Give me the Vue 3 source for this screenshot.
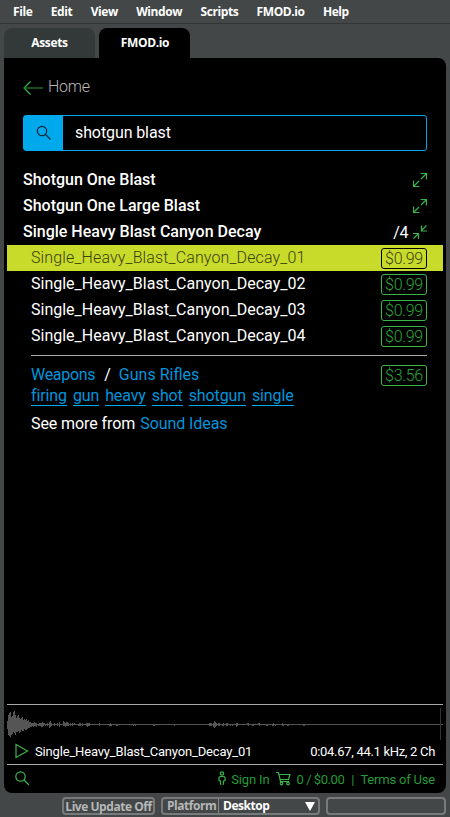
<script setup>
const menus = ['File', 'Edit', 'View', 'Window', 'Scripts', 'FMOD.io', 'Help']
const titles = [
  { name: 'Shotgun One Blast', open: false },
  { name: 'Shotgun One Large Blast', open: false },
  { name: 'Single Heavy Blast Canyon Decay', open: true },
]
const sounds = ['01', '02', '03', '04'].map((n, i) => ({
  name: 'Single_Heavy_Blast_Canyon_Decay_' + n,
  selected: i === 0,
}))
const tags = ['firing', 'gun', 'heavy', 'shot', 'shotgun', 'single']

// Peak heights above and below the centre line, one pair per pixel column
const attack = [
  [3, 4], [9, 10], [11, 11], [12, 12], [7, 10], [8, 9], [12, 7], [13, 8], [9, 10], [6, 7],
  [8, 7], [9, 6], [6, 8], [5, 7], [6, 5], [7, 6], [4, 6], [5, 4], [4, 5], [5, 5],
  [3, 4], [4, 3], [2, 3], [2, 2], [1, 2], [1, 1], [1, 2], [2, 1], [1, 1], [1, 2],
]
const bumps = {
  31: [0, 1], 32: [1, 1], 33: [1, 1], 34: [1, 2], 35: [2, 2], 36: [1, 1], 37: [1, 0], 38: [0, 1], 40: [1, 1],
  42: [2, 3], 43: [3, 2], 44: [1, 1], 47: [1, 1], 50: [1, 1], 52: [2, 2], 56: [3, 1], 57: [2, 1], 58: [1, 2],
  59: [2, 1], 60: [2, 1], 61: [1, 1], 63: [1, 1], 65: [1, 1], 67: [1, 0], 71: [0, 1], 72: [1, 1], 73: [1, 1],
  75: [1, 1], 79: [1, 1], 80: [1, 2], 81: [1, 1], 82: [1, 1], 92: [1, 1], 102: [0, 1], 103: [1, 1], 104: [0, 1],
  109: [0, 1], 110: [0, 1], 126: [0, 1], 128: [0, 1], 146: [0, 1], 147: [0, 1], 167: [0, 1],
  202: [1, 1], 203: [1, 1], 204: [1, 1], 206: [1, 2], 207: [3, 3], 208: [2, 2], 209: [1, 1], 211: [1, 1],
  212: [1, 1], 215: [0, 1], 216: [1, 1], 219: [1, 1], 220: [1, 1], 223: [0, 1], 225: [0, 1], 229: [1, 2],
  230: [1, 1], 240: [1, 0], 241: [1, 1], 245: [0, 1], 246: [0, 1], 251: [1, 0], 252: [1, 1], 259: [0, 1],
  260: [0, 1], 265: [0, 1], 266: [1, 1], 268: [0, 1], 275: [1, 1], 276: [0, 1], 280: [0, 1], 281: [0, 1], 296: [0, 1], 297: [0, 1],
}
const bars = attack.map((p, i) => [i, p]).concat(Object.entries(bumps).map(([x, p]) => [Number(x), p]))
const wave = bars.map(([x, [up, down]]) => `M${x} ${19 - up}h1v${up + down + 1}h-1z`).join('')
</script>

<template>
  <div class="app">
    <nav class="menu"><span v-for="m in menus" :key="m">{{ m }}</span></nav>
    <div class="tabs">
      <div class="tab">Assets</div>
      <div class="tab active">FMOD.io</div>
    </div>

    <main class="panel">
      <div class="home">
        <svg width="20" height="16" viewBox="0 0 20 16"><path d="M7.500 1.500 1 8l6.500 6.500" /><path class="shaft" d="M1 8h19" /></svg>
        <span>Home</span>
      </div>
      <div class="search">
        <div class="lens">
          <svg width="16" height="16" viewBox="0 0 16 16"><circle cx="6" cy="6" r="4.700" /><path d="m9.500 9.500 5 5" /></svg>
        </div>
        <span class="query">shotgun blast</span>
      </div>

      <div v-for="t in titles" :key="t.name" class="title">
        <span class="name">{{ t.name }}</span>
        <span v-if="t.open" class="count">/4</span>
        <svg width="14" height="14" viewBox="0 0 14 14">
          <path v-if="t.open" d="M13.500.5 8.500 5.500M8.500 0.500v5.500H14M.5 13.500l5-5M0 8.500h5.500V14" />
          <path v-else d="M8 6l5.500-5.500M7.500 .5h6V6.500M6 8l-5.500 5.500M.5 7.500v6H6.500" />
        </svg>
      </div>

      <div v-for="s in sounds" :key="s.name" class="sound" :class="{ selected: s.selected }">
        <span class="name">{{ s.name }}</span>
        <span class="price">$0.99</span>
      </div>

      <section class="details">
        <div class="category">
          <a class="c1">Weapons</a><span class="slash">/</span><a class="c2">Guns Rifles</a>
          <span class="price">$3.56</span>
        </div>
        <div class="tags"><a v-for="t in tags" :key="t">{{ t }}</a></div>
        <div class="more"><span>See more from</span><a>Sound Ideas</a></div>
      </section>

      <section class="player">
        <svg class="wave" width="436" height="38" viewBox="0 0 436 38">
          <path :d="wave" /><path d="M0 19h436v1H0z" /><path class="cursor" d="M433 3h1v32h-1z" />
        </svg>
        <div class="track">
          <svg width="14" height="16" viewBox="0 0 14 16"><path d="M1 1.500v13L12.500 8z" /></svg>
          <span class="file">Single_Heavy_Blast_Canyon_Decay_01</span>
          <span class="info">0:04.67, 44.1 kHz, 2 Ch</span>
        </div>
      </section>

      <footer class="account">
        <svg class="find" width="15" height="15" viewBox="0 0 15 15"><circle cx="5.500" cy="5.500" r="4.700" /><path d="m9 9 5 5" /></svg>
        <svg class="person" width="8" height="15" viewBox="0 0 8 15">
          <circle cx="4" cy="2.500" r="1.700" />
          <path d="M2.500 13.500V10L1 9.500V6.500q0-1 1.500-1h3q1.500 0 1.500 1v3L5.500 10v3.500M2.500 13.500h.8M5.500 13.500h-.8" />
        </svg>
        <span class="sign">Sign In</span>
        <svg class="cart" width="15" height="15" viewBox="0 0 15 15">
          <path d="M0 1.500h2.500l2 9H13M3 3.500h11l-1.500 5H4" /><circle cx="5.500" cy="12.500" r="1.300" /><circle cx="12" cy="12.500" r="1.300" />
        </svg>
        <span class="total">0 / $0.00</span>
        <span class="bar">|</span>
        <span class="terms">Terms of Use</span>
      </footer>
    </main>

    <div class="status">
      <div class="box live">Live Update Off</div>
      <div class="box platform">
        <span class="label">Platform</span>
        <span class="value">Desktop</span>
        <svg width="10" height="9" viewBox="0 0 10 9"><path d="M0 0h10L5 9z" /></svg>
      </div>
      <div class="box empty"></div>
    </div>
  </div>
</template>

<style>
body { margin: 0; background: #434747; }
</style>

<style scoped>
* { box-sizing: border-box; }
.app { width: 450px; height: 817px; display: flex; flex-direction: column; overflow: hidden; background: #434747; color: #fff; font-family: Roboto, sans-serif; font-size: 16px; white-space: nowrap; }
svg { display: block; flex: none; fill: none; stroke: #39b54a; stroke-width: 1.200; }
a { color: #0095dc; }
.menu { height: 24px; border-bottom: 1px solid #313535; display: flex; gap: 18.400px; padding-left: 13px; font: 700 12px/23px "Open Sans", sans-serif; letter-spacing: -.42px; }
.tabs { height: 34px; padding: 4px 4px 0; display: flex; gap: 4px; }
.tab { width: 91px; border-radius: 8px 8px 0 0; background: #333838; text-align: center; font: 700 12px/30px "Open Sans", sans-serif; letter-spacing: -.35px; }
.tab.active { background: #000; padding-left: 1px; }
.panel { width: 442px; height: 735px; margin-left: 4px; padding: 0 3px; background: #000; border-radius: 0 8px 8px 8px; display: flex; flex-direction: column; flex: none; }
.home { height: 57px; padding: 2px 0 0 16px; display: flex; align-items: center; gap: 5px; color: #b9b9b9; letter-spacing: -.25px; }
.home span { font-weight: 300; margin-top: -2px; }
.shaft { stroke: #238332; }
.search { height: 36px; margin: 0 16px 16px; border: 1px solid #00a9ec; border-radius: 3px; display: flex; align-items: center; }
.lens { width: 39px; height: 34px; background: #00a9ec; display: flex; align-items: center; justify-content: center; }
.lens svg { stroke: #072736; }
.query { padding-left: 12px; margin-top: -2px; letter-spacing: -.1px; }
.title { height: 26px; padding: 0 16px; display: flex; align-items: center; font-weight: 500; }
.title .name { flex: 1; margin-top: -2px; }
.count { font-weight: 400; margin-right: 5px; letter-spacing: -.4px; }
.sound { height: 26px; padding: 0 16px 0 24px; display: flex; align-items: center; justify-content: space-between; }
.sound .name { margin-top: -2px; }
.price { width: 46px; height: 21px; border: 1px solid #39b54a; border-radius: 3px; color: #2aa63a; text-align: center; line-height: 19px; font-weight: 300; letter-spacing: -.3px; }
.selected { background: #c9db2a; color: #39410c; }
.selected .name { font-weight: 300; letter-spacing: .14px; }
.selected .price { border-color: #000; color: #39410c; }
.details { margin: 6px 16px 0 24px; border-top: 1px solid #aaa; }
.category { display: flex; padding-top: 9px; height: 30px; line-height: 19px; }
.c1 { letter-spacing: -.3px; }
.slash { margin: 0 8px 0 9px; }
.category .price { margin-left: auto; }
.tags { display: flex; gap: 6px; height: 20px; line-height: 20px; }
.tags a { border-bottom: 1px solid #00a9ec; letter-spacing: -.12px; }
.more { display: flex; gap: 5px; height: 36px; line-height: 35px; letter-spacing: -.08px; }
.player { margin-top: auto; height: 61px; border-top: 1px solid #aaa; border-bottom: 1px solid #aaa; }
.wave path { fill: #555; stroke: none; }
.wave .cursor { fill: #333; }
.track { display: flex; align-items: center; height: 16px; padding: 0 8px; font-size: 13px; }
.file { margin-left: 6px; letter-spacing: -.17px; }
.info { margin-left: auto; letter-spacing: -.3px; }
.account { height: 28px; padding: 0 8px; display: flex; align-items: center; color: #269b35; font-size: 13px; }
.find { margin-top: -1px; }
.person { margin-left: auto; margin-right: 5px; margin-top: -1px; }
.sign { letter-spacing: -.15px; }
.cart { margin: -2px 6px 0; }
.total { letter-spacing: -.45px; }
.bar { margin: 0 6px 0 7px; }
.terms { letter-spacing: -.2px; }
.status { display: flex; gap: 6px; padding: 4px 4px 0 62px; font: 700 12px/15px "Open Sans", sans-serif; letter-spacing: -.46px; }
.box { height: 18px; border: 2px solid #777a7a; border-radius: 4px; display: flex; flex: none; align-items: center; }
.live { width: 93px; color: #b5b7b7; justify-content: center; }
.platform { width: 159px; }
.label { width: 56px; height: 14px; border-right: 1px solid #858787; padding-left: 4px; color: #b5b7b7; line-height: 14px; }
.value { padding-left: 4px; flex: 1; line-height: 14px; }
.platform svg { fill: #fff; stroke: none; margin-right: 3px; }
.empty { width: 120px; }
</style>
